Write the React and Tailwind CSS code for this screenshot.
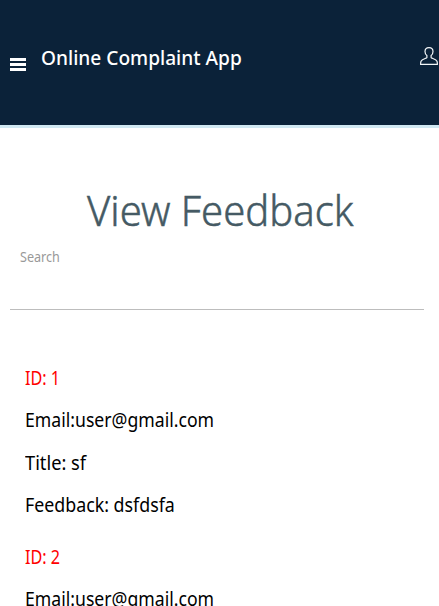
const entries = [
  { id: 1, email: 'user@gmail.com', title: 'sf', feedback: 'dsfdsfa' },
  { id: 2, email: 'user@gmail.com', title: 'sf', feedback: 'dsfdsfa' },
];

function MenuIcon() {
  return (
    <svg width="16" height="13" viewBox="0 0 16 13" fill="white">
      <path d="M0 0h16v3H0zM0 5h16v3H0zM0 10h16v3H0z" />
    </svg>
  );
}

function UserIcon() {
  return (
    <svg width="18" height="18" viewBox="0 0 18 18" fill="none" stroke="#f3f6f8" strokeWidth="1.2" strokeLinejoin="round">
      <path d="M9 .6C6.600 .6 5 2.200 5 4.600C5 6.300 5.700 7.700 6.900 8.600V10.500C6.700 11.300 1.900 12.100 1 14.300C.7 15.200 .6 16.400 .6 17.400H17.400C17.400 16.400 17.300 15.200 17 14.300C16.100 12.100 11.300 11.300 11.100 10.500V8.600C12.300 7.700 13 6.300 13 4.600C13 2.200 11.400 .6 9 .6Z" />
    </svg>
  );
}

function Entry({ entry }) {
  return (
    <div className="mb-[26px] flex flex-col items-start gap-[16.300px] text-[20.500px] leading-[26px] font-normal text-black">
      <p className="origin-left scale-x-[0.790] whitespace-nowrap text-[#ff0000]">ID: {entry.id}</p>
      <p className="origin-left scale-x-[0.860] whitespace-nowrap">Email:{entry.email}</p>
      <p className="origin-left scale-x-[0.890] whitespace-nowrap">Title: {entry.title}</p>
      <p className="origin-left scale-x-[0.868] whitespace-nowrap">Feedback: {entry.feedback}</p>
    </div>
  );
}

export default function App() {
  return (
    <div className="h-[606px] w-[439px] overflow-hidden bg-white font-['Noto_Sans',sans-serif]">
      <header className="flex h-[128px] items-start border-b-3 border-[#d0e8f2] bg-[#0b2239] pl-[10px]">
        <div className="mt-[58px]"><MenuIcon /></div>
        <h1 className="mt-[45px] ml-[15px] origin-left scale-x-[0.956] text-[20px] leading-[26px] font-medium whitespace-nowrap text-white">Online Complaint App</h1>
        <div className="mt-[47px] mr-px ml-auto"><UserIcon /></div>
      </header>
      <main>
        <h2 className="mt-[57px] ml-[87px] w-max origin-left scale-x-[0.965] text-[41.500px] leading-[50px] font-light whitespace-nowrap text-[#455a64] [-webkit-text-stroke:0.500px_#455a64]">View Feedback</h2>
        <div className="mr-[15px] ml-[10px] h-[75px] border-b border-[#bdbdbd] pt-[9px] pl-[10px]">
          <label className="inline-block origin-left scale-x-[0.900] text-[14px] leading-[20px] text-[#999]">Search</label>
        </div>
        <section className="mt-[54px] pl-[25px]">
          {entries.map((entry) => <Entry key={entry.id} entry={entry} />)}
        </section>
      </main>
    </div>
  );
}
